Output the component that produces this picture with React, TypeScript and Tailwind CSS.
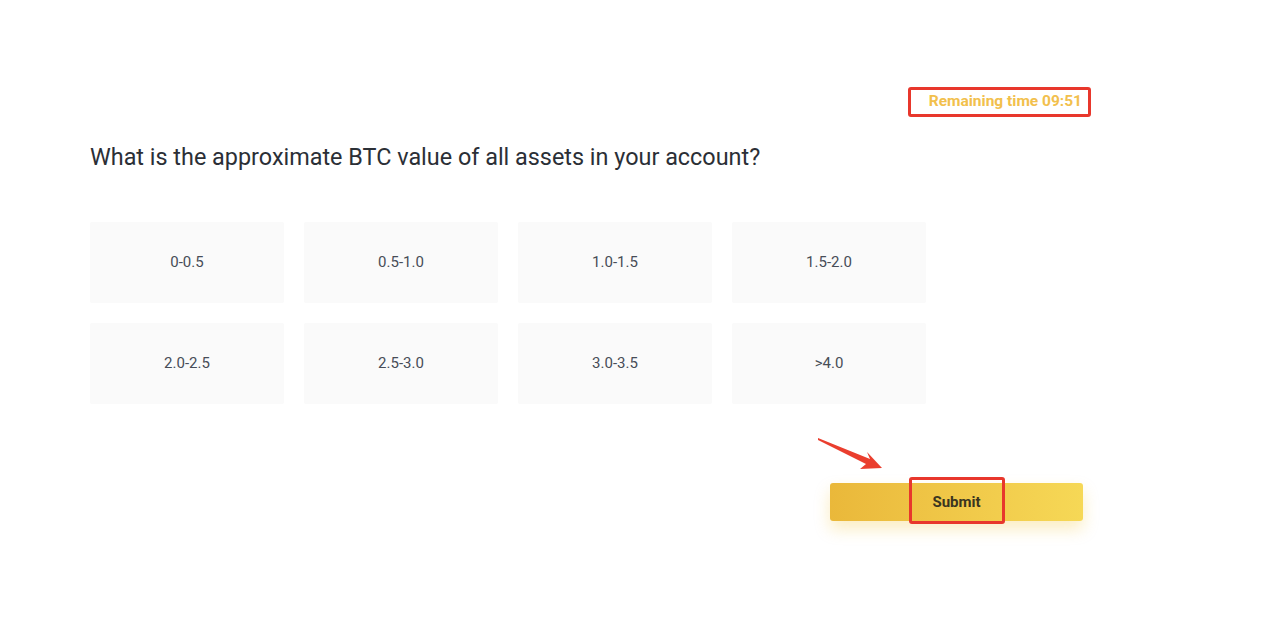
import React from 'react';

const OPTIONS = ['0-0.5', '0.5-1.0', '1.0-1.5', '1.5-2.0', '2.0-2.5', '2.5-3.0', '3.0-3.5', '>4.0'];

const App: React.FC = () => {
  return (
    <div className="relative w-[1262px] h-[640px] bg-white overflow-hidden font-['Roboto',sans-serif]">
      <div className="ml-[90px] w-[993px] pt-[88px] flex flex-col">
        {/* timer */}
        <div className="flex justify-end h-[28px]">
          <span className="relative inline-flex items-center h-[28px] text-[15.5px] font-bold text-[#f2c04c] mr-[1px]">
            Remaining time 09:51
            <span className="absolute left-[-21px] right-[-9px] top-[-1px] bottom-[-1px] border-[3px] border-[#e8372c] rounded-[3px]" />
          </span>
        </div>

        <h2 className="mt-[25px] text-[23.4px] leading-[32px] text-[#2b2f36]">
          What is the approximate BTC value of all assets in your account?
        </h2>

        <div className="mt-[49px] grid grid-cols-[repeat(4,194px)] auto-rows-[81px] gap-[20px]">
          {OPTIONS.map(o => (
            <div key={o} className="bg-[#fafafa] rounded-[2px] flex items-center justify-center text-[15px] text-[#474d57]">
              {o}
            </div>
          ))}
        </div>

        <div className="mt-[79px] flex justify-end">
          <button className="relative w-[253px] h-[38px] rounded-[3px] bg-gradient-to-r from-[#eab83a] to-[#f6d856] shadow-[0_8px_16px_rgba(240,185,11,0.25)] text-[15px] font-bold text-[#3a3520]">
            Submit
            <span className="absolute left-[79px] w-[96px] top-[-6px] bottom-[-3px] border-[3px] border-[#e8372c] rounded-[3px]" />
          </button>
        </div>
      </div>

      {/* annotation arrow */}
      <svg className="absolute left-[814px] top-[434px]" width="74" height="40" viewBox="0 0 74 40">
        <polygon points="4,4 56,25 53,18 68,34 46,35 52,30 4,6" fill="#ea3e2e" />
      </svg>
    </div>
  );
};

export default App;
